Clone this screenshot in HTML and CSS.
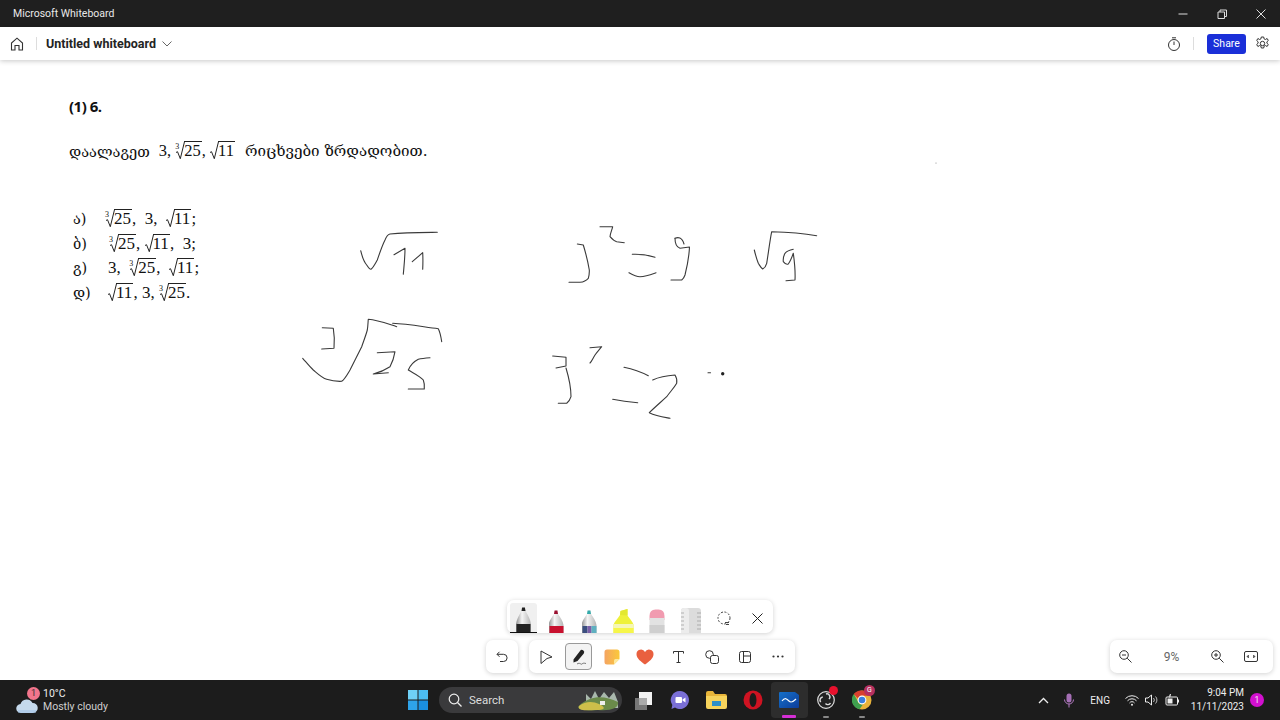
FILE: index.html
```html
<!DOCTYPE html>
<html lang="en">
<head>
    <meta charset="UTF-8">
    <title>Microsoft Whiteboard</title>
    <link rel="stylesheet" href="styles.css">
</head>
<body>
    <div class="titlebar">
        <span class="app-name">Microsoft Whiteboard</span>
        <div class="window-controls">
            <svg width="12" height="12" viewBox="0 0 12 12"><path d="M1.500 6h9" stroke="#ddd" fill="none"/></svg>
            <svg width="12" height="12" viewBox="0 0 12 12"><path d="M2 4h6.500v6.500h-6.500zM4 4v-2h6.500v6.500h-2" stroke="#ddd" fill="none"/></svg>
            <svg width="12" height="12" viewBox="0 0 12 12"><path d="M1.500 1.500l9 9M10.500 1.500l-9 9" stroke="#ddd" fill="none"/></svg>
        </div>
    </div>

    <header class="appbar">
        <svg class="home-icon" width="14" height="14" viewBox="0 0 14 14"><path d="M1.500 13v-7l5.500-4.800 5.500 4.800v7h-3.500v-4.500h-4v4.500z" stroke="#333" stroke-width="1.100" fill="none"/></svg>
        <span class="divider"></span>
        <span class="board-name">Untitled whiteboard</span>
        <svg width="10" height="6" viewBox="0 0 10 6"><path d="M.5.500l4.500 4.500 4.500-4.500" stroke="#666" fill="none"/></svg>
        <div class="appbar-right">
            <svg width="14" height="14" viewBox="0 0 14 14"><circle cx="7" cy="8" r="5.500" stroke="#333" fill="none"/><path d="M5 .8h4M7 4.500v3.500" stroke="#333" fill="none"/></svg>
            <span class="divider"></span>
            <button class="share">Share</button>
            <svg width="15" height="15" viewBox="0 0 15 15"><circle cx="7.500" cy="7.500" r="2.200" stroke="#333" fill="none"/><path d="M6.300 1h2.400l.4 1.900 1.300.6 1.700-1 1.200 2-1.400 1.300v1.400l1.400 1.300-1.200 2-1.700-1-1.300.6-.4 1.900h-2.400l-.4-1.900-1.300-.6-1.700 1-1.200-2 1.400-1.300v-1.400l-1.400-1.300 1.200-2 1.700 1 1.300-.6z" stroke="#333" fill="none"/></svg>
        </div>
    </header>

    <main class="canvas">
        <section class="question">
            <div class="q-number">(1) 6.</div>
            <div class="q-prompt">
                <span class="geo">დაალაგეთ</span>
                <span class="q-values">3, <sup class="idx">3</sup><span class="rad"><svg class="rad-sign" width="9" height="19" viewBox="0 0 9 19"><path d="M0 11.500l1.500-.8 2.800 7 4.200-17" stroke="#222" fill="none"/></svg><span class="radicand">25</span></span>, <span class="rad"><svg class="rad-sign" width="9" height="19" viewBox="0 0 9 19"><path d="M0 11.500l1.500-.8 2.800 7 4.200-17" stroke="#222" fill="none"/></svg><span class="radicand">11</span></span></span>
                <span class="geo geo-wide">რიცხვები ზრდადობით.</span>
            </div>
            <ol class="options">
                <li class="opt"><span class="geo opt-label">ა)</span><span class="opt-a"><sup class="idx">3</sup><span class="rad"><svg class="rad-sign" width="9" height="19" viewBox="0 0 9 19"><path d="M0 11.500l1.500-.8 2.800 7 4.200-17" stroke="#222" fill="none"/></svg><span class="radicand">25</span></span>,&nbsp; 3,&nbsp; <span class="rad"><svg class="rad-sign" width="9" height="19" viewBox="0 0 9 19"><path d="M0 11.500l1.500-.8 2.800 7 4.200-17" stroke="#222" fill="none"/></svg><span class="radicand">11</span></span>;</span></li>
                <li class="opt"><span class="geo opt-label">ბ)</span><span class="opt-b"><sup class="idx">3</sup><span class="rad"><svg class="rad-sign" width="9" height="19" viewBox="0 0 9 19"><path d="M0 11.500l1.500-.8 2.800 7 4.200-17" stroke="#222" fill="none"/></svg><span class="radicand">25</span></span>, <span class="rad"><svg class="rad-sign" width="9" height="19" viewBox="0 0 9 19"><path d="M0 11.500l1.500-.8 2.800 7 4.200-17" stroke="#222" fill="none"/></svg><span class="radicand">11</span></span>,&nbsp;&nbsp;3;</span></li>
                <li class="opt"><span class="geo opt-label">გ)</span><span class="opt-c">3,&nbsp; <sup class="idx">3</sup><span class="rad"><svg class="rad-sign" width="9" height="19" viewBox="0 0 9 19"><path d="M0 11.500l1.500-.8 2.800 7 4.200-17" stroke="#222" fill="none"/></svg><span class="radicand">25</span></span>,&nbsp; <span class="rad"><svg class="rad-sign" width="9" height="19" viewBox="0 0 9 19"><path d="M0 11.500l1.500-.8 2.800 7 4.200-17" stroke="#222" fill="none"/></svg><span class="radicand">11</span></span>;</span></li>
                <li class="opt"><span class="geo opt-label">დ)</span><span class="opt-c"><span class="rad"><svg class="rad-sign" width="9" height="19" viewBox="0 0 9 19"><path d="M0 11.500l1.500-.8 2.800 7 4.200-17" stroke="#222" fill="none"/></svg><span class="radicand">11</span></span>, 3, <sup class="idx">3</sup><span class="rad"><svg class="rad-sign" width="9" height="19" viewBox="0 0 9 19"><path d="M0 11.500l1.500-.8 2.800 7 4.200-17" stroke="#222" fill="none"/></svg><span class="radicand">25</span></span>.</span></li>
            </ol>
        </section>

        <!-- ink strokes, page coordinates minus the 60px of header -->
        <svg class="ink" width="1280" height="620" viewBox="0 60 1280 620">
            <g fill="none" stroke="#3a3a3a" stroke-width="1.100" stroke-linecap="round" stroke-linejoin="round">
                <path d="M360.700 250.700C362 256 364 262 366.700 265C368 267 370 269.500 371 269.300C373 268 375 264 377.300 260C380 252 382 246 385 240C386.500 236 388 234.500 390 234C405 232.500 420 232.500 437.300 232.300"/>
                <path d="M394 254.700L405 248.300C405 258 404 266 403.300 274.300"/>
                <path d="M412.300 261.700L422.700 252.700C423 258 423 263 422.700 269.300"/>
                <path d="M302.700 358.300C306 362 309 366 313.300 370C318 374 322 378 326.700 379.300C332 381 337 381.500 341.700 381.300C345 379 347 375 350 370C354 362 358 354 361.700 346.700C364 340 366 335 367.300 330C368 326 368 322 368.300 319.300C378 320 388 324 396.700 326.700"/>
                <path d="M392.700 323.300C408 324 424 327 438.300 328.700C440 332 441 337 441.700 341.700"/>
                <path d="M322.300 327.700L333.300 328.300C334.500 335 334.500 342 334 348.300L321.700 349"/>
                <path d="M377.300 352.700L395 351.700C394 358 392 363 390 366.700C385 370 379 372.500 373.300 374L388.300 372.700"/>
                <path d="M430 357.700C425 358 421 358.500 418.300 359.300C413 362 410 366 408.300 370C413 373 420 376 423.300 380C424.500 383 424.500 386 424.300 389L408.300 389"/>
                <path d="M577.300 244L583.300 245C586 254 588 262 589.300 270C589.500 274 589 276 588.300 278.300C586 281 583 282 580 282.300L569 282.300"/>
                <path d="M600 226.700L612.700 226.700C612 230 610 234 610 236.700C612 239 614 241 616.700 241.700L624.300 242.700"/>
                <path d="M632.300 254.300C640 254 648 255 655 257.300"/>
                <path d="M629 272.700C633 275 636 276.700 640 276.700C646 276.500 651 274.500 656 272.700"/>
                <path d="M675 238.300C678 237 682 237 684 244"/>
                <path d="M675 238.300C675 243 676 247 680 248.300L689.500 247C689 258 687 267 685 275C684 278 683 279 681.700 280L671 280"/>
                <path d="M754.300 250C755.500 255 757 260 758.300 263.300C760 266 761 268 762.700 269C764.500 268 766 266 766.700 263.300C768.500 252 770 240 771.700 231.700C787 232 802 233 816.700 235.700"/>
                <path d="M793.300 249.300C790 250 787 251 785 253.300C783.500 256 783 259 783.300 261.700C785 264 787 264.500 788.300 264C790.500 261 792 257 793.300 253.300C794.500 262 795.500 271 795 280L786 280.700"/>
                <path d="M552.700 356L566 357.300L566 366L556 368"/>
                <path d="M566 368C569 378 571 388 571 396.700C570 400 568.500 402 566.700 403.300L558.300 403.300"/>
                <path d="M590 347.700L601.700 346.700C599 350 597 352 595 355C593 358 592 361 590 363"/>
                <path d="M624 367.300C632 369 641 372 648.300 375.700"/>
                <path d="M612.700 399.300C621 401 629 402 637.700 402.700"/>
                <path d="M652.700 380C659 377 667 375.500 675 375C677 378 677 381 676.700 383.300C674 388 670 392 666.700 396.700C661 402 655 407 649.300 412.700C656 416 663 417 670 418.300"/>
                <path d="M708 372.800h2.500"/>
            </g>
            <circle cx="722.700" cy="373.700" r="1.700" fill="#222"/>
            <circle cx="936" cy="163" r=".6" fill="#888"/>
        </svg>

        <div class="pen-tray">
            <div class="pen pen-active">
                <svg width="27" height="26" viewBox="0 0 27 26"><defs><linearGradient id="barrel" x1="0" y1="0" x2="1" y2="0"><stop offset="0" stop-color="#8f8f8f"/><stop offset=".4" stop-color="#f5f5f5"/><stop offset="1" stop-color="#b5b5b5"/></linearGradient></defs><path d="M11.500 4l.6-3.500h2.800l.6 3.500c2.500 4 5 9 5.500 13v8h-15v-8c.5-4 3-9 5.500-13z" fill="url(#barrel)"/><path d="M11.500 4l.6-3.500h2.800l.6 3.500z" fill="#222"/><path d="M6.500 17h14v8h-14z" fill="#222"/><path d="M0 25.500h27" stroke="#111"/></svg>
            </div>
            <div class="pen">
                <svg width="15" height="23" viewBox="0 0 15 23"><path d="M5 4l.6-3.500h2.800l.6 3.500c2.500 4 5 7 5.500 11v8h-15v-8c.5-4 3-7 5.500-11z" fill="url(#barrel)"/><path d="M5 4l.6-3.500h2.800l.6 3.500z" fill="#9a1030"/><path d="M.5 16h14v7h-14z" fill="#c8102e"/></svg>
            </div>
            <div class="pen">
                <svg width="15" height="23" viewBox="0 0 15 23"><path d="M5 4l.6-3.500h2.800l.6 3.500c2.500 4 5 7 5.500 11v8h-15v-8c.5-4 3-7 5.500-11z" fill="url(#barrel)"/><path d="M5 4l.6-3.500h2.800l.6 3.500z" fill="#3aa"/><path d="M.5 16h5v7h-5z" fill="#3b4f7f"/><path d="M5.500 16h4v7h-4z" fill="#7a5fa8"/><path d="M9.500 16h5v7h-5z" fill="#5fb0c0"/></svg>
            </div>
            <div class="pen">
                <svg width="21" height="24" viewBox="0 0 21 24"><path d="M7 6l.5-4 7-2v6.500c2 3 5 6 6 9v8.500h-20v-8.500c1-3 4.500-6 6.500-9.500z" fill="#eef13a"/><path d="M7 6l.5-4 7-2v6.500z" fill="#e3e830"/><path d="M.5 19h20v5h-20z" fill="#f6f64a"/><path d="M.5 15h20v4h-20z" fill="#f5f6b8"/></svg>
            </div>
            <div class="pen">
                <svg width="16" height="24" viewBox="0 0 16 24"><path d="M.5 7q0-6.500 6-6.500h3q6 0 6 6.500v4h-15z" fill="#f19bb0"/><path d="M.5 9h15v15h-15z" fill="#e2e2e2"/><path d="M.5 16h15v8h-15z" fill="#cfcfcf"/></svg>
            </div>
            <div class="pen">
                <svg width="20" height="25" viewBox="0 0 20 25"><rect x="0" y="0" width="20" height="30" rx="3" fill="#dcdcdc"/><rect x="0" y="0" width="8" height="30" rx="3" fill="#ececec"/><path d="M0 5h3M0 9h3M0 13h3M0 17h3M0 21h3M16 5h4M16 9h4M16 13h4M16 17h4M16 21h4" stroke="#999" stroke-width=".7"/></svg>
            </div>
            <div class="pen pen-icon">
                <svg width="15" height="15" viewBox="0 0 15 15"><circle cx="7" cy="7" r="6" stroke="#444" stroke-dasharray="2 1.500" fill="none"/><path d="M8 11.500h4M9 13.500h3" stroke="#444"/></svg>
            </div>
            <div class="pen pen-icon">
                <svg width="11" height="11" viewBox="0 0 11 11"><path d="M.5.500l10 10M10.500.500l-10 10" stroke="#222" fill="none"/></svg>
            </div>
        </div>

        <div class="tool-box undo-box">
            <svg width="12" height="12" viewBox="0 0 12 12"><path d="M3.500.800l-2.500 2.500 2.500 2.500M1 3.300h6.500a3.500 3.500 0 0 1 0 7.200h-3.500" stroke="#333" fill="none"/></svg>
        </div>

        <div class="tool-box main-tools">
            <span class="tool tool-cursor"><svg width="13" height="14" viewBox="0 0 13 14"><path d="M1 1l11 6-5 1.500-6 5z" stroke="#333" fill="none"/></svg></span>
            <span class="tool tool-active"><svg width="16" height="16" viewBox="0 0 16 16"><path d="M2.500 10.500l6.500-8.500a2 2 0 0 1 3.800 2.500l-6.300 7.500-4 1.500z" fill="#222"/><path d="M6 15c3-2 4 1 5 0s2-1 4-.5" stroke="#444" stroke-width=".7" fill="none"/></svg></span>
            <span class="tool"><svg width="16" height="16" viewBox="0 0 16 16"><defs><linearGradient id="note" x1="0" y1="0" x2="1" y2="0"><stop offset="0" stop-color="#f4a462"/><stop offset="1" stop-color="#fbc93a"/></linearGradient></defs><path d="M3 .5h10a2.500 2.500 0 0 1 2.500 2.500v7l-5.500 5.500h-7a2.500 2.500 0 0 1-2.500-2.500v-10a2.500 2.500 0 0 1 2.500-2.500z" fill="url(#note)"/><path d="M15.500 10h-4a1.500 1.500 0 0 0-1.500 1.500v4z" fill="#fdeaa0"/></svg></span>
            <span class="tool"><svg width="18" height="16" viewBox="0 0 18 16"><path d="M9 15.500c-4-3-8.500-6-8.500-10.300a4.500 4.500 0 0 1 8.500-2.200 4.500 4.500 0 0 1 8.500 2.200c0 4.300-4.500 7.300-8.500 10.300z" fill="#e9603f"/></svg></span>
            <span class="tool"><svg width="11" height="12" viewBox="0 0 11 12"><path d="M.5 2.500v-2h10v2M5.500.500v11M3.500 11.500h4" stroke="#333" fill="none"/></svg></span>
            <span class="tool"><svg width="14" height="14" viewBox="0 0 14 14"><circle cx="4.500" cy="4.500" r="3.800" stroke="#333" fill="none"/><rect x="5.500" y="5.500" width="8" height="8" rx="2" fill="#fff" stroke="#333"/></svg></span>
            <span class="tool"><svg width="12" height="12" viewBox="0 0 12 12"><rect x=".5" y=".5" width="11" height="11" rx="2" stroke="#333" fill="none"/><path d="M4.500.500v11M4.500 5h7" stroke="#333" fill="none"/></svg></span>
            <span class="tool"><svg width="12" height="3" viewBox="0 0 12 3"><circle cx="1.500" cy="1.500" r="1.100" fill="#333"/><circle cx="6" cy="1.500" r="1.100" fill="#333"/><circle cx="10.500" cy="1.500" r="1.100" fill="#333"/></svg></span>
        </div>

        <div class="tool-box zoom-box">
            <svg width="13" height="13" viewBox="0 0 13 13"><circle cx="5" cy="5" r="4.300" stroke="#333" fill="none"/><path d="M8.200 8.200l4.300 4.300M3 5h4" stroke="#333" fill="none"/></svg>
            <span class="zoom-value">9%</span>
            <svg width="13" height="13" viewBox="0 0 13 13"><circle cx="5" cy="5" r="4.300" stroke="#333" fill="none"/><path d="M8.200 8.200l4.300 4.300M3 5h4M5 3v4" stroke="#333" fill="none"/></svg>
            <svg class="zoom-fit" width="14" height="11" viewBox="0 0 14 11"><rect x=".5" y=".5" width="13" height="10" rx="1.500" stroke="#333" fill="none"/><path d="M3 5.500l1.500-1.500v3zM11 5.500l-1.500-1.500v3z" fill="#333" stroke="#333" stroke-width=".5"/></svg>
        </div>
    </main>

    <footer class="taskbar">
        <div class="weather">
            <div class="weather-icon">
                <svg width="22" height="24" viewBox="0 0 22 24"><path d="M15 2a8 8 0 0 1-9 11l8-2z" fill="#e7b566"/><path d="M5 23a4.500 4.500 0 0 1-.5-9 6.500 6.500 0 0 1 12-1 5 5 0 0 1 .5 10z" fill="#c5d9ec"/><path d="M2 20h18v3h-18z" fill="#9fc1e6" opacity=".5"/></svg>
                <span class="weather-badge">1</span>
            </div>
            <div class="weather-text">
                <span class="temp">10°C</span>
                <span class="cond">Mostly cloudy</span>
            </div>
        </div>

        <div class="task-icons">
            <span class="task-icon start-icon">
                <svg width="20" height="20" viewBox="0 0 20 20"><path d="M0 0h9.500v9.500h-9.500z" fill="#6fd0f6"/><path d="M10.500 0h9.500v9.500h-9.500z" fill="#4cbdf2"/><path d="M0 10.500h9.500v9.500h-9.500z" fill="#2ea3ea"/><path d="M10.500 10.500h9.500v9.500h-9.500z" fill="#1a8fe0"/></svg>
            </span>
            <div class="search-pill">
                <svg width="14" height="14" viewBox="0 0 14 14"><circle cx="6" cy="6" r="4.800" stroke="#eee" stroke-width="1.200" fill="none"/><path d="M9.500 9.500l4 4" stroke="#eee" stroke-width="1.200"/></svg>
                <span class="search-label">Search</span>
                <svg class="search-art" width="42" height="24" viewBox="0 0 42 24"><path d="M8 6l5 5 4-8 4 8 5-7 5 6 5-6 4 10v6h-32z" fill="#a9b8ad"/><path d="M12 11c8-3 18-2 28 3 1 6-6 9-20 8-14 1-22-1-19-4 2-3 6-5 11-7z" fill="#6a8a4a"/><path d="M1 18c6-5 14-5 20-2s8 6-4 6c-10 1-18 0-16-4z" fill="#cdbf4a"/><path d="M22 13h5v4h-5z" fill="#eee"/></svg>
            </div>
            <span class="task-icon">
                <svg width="20" height="20" viewBox="0 0 20 20"><rect x="2" y="8" width="12" height="12" fill="#777"/><rect x="6" y="2" width="13" height="13" fill="#f2f2f2"/><rect x="6" y="8" width="8" height="7" fill="#aaa"/></svg>
            </span>
            <span class="task-icon">
                <svg width="20" height="20" viewBox="0 0 20 20"><path d="M10 1a9 9 0 1 1-5 16.500l-3.500 1.500.8-4a9 9 0 0 1 7.700-14z" fill="#7a6fd6"/><rect x="5.500" y="7" width="6.500" height="6" rx="1" fill="#fff"/><path d="M12.500 9.500l3-2v5l-3-2z" fill="#fff"/></svg>
            </span>
            <span class="task-icon">
                <svg width="21" height="18" viewBox="0 0 21 18"><path d="M0 2a2 2 0 0 1 2-2h5l2 3h10a2 2 0 0 1 2 2v3h-21z" fill="#e8b53a"/><path d="M0 5h21v11a2 2 0 0 1-2 2h-17a2 2 0 0 1-2-2z" fill="#f7d35c"/><rect x="6" y="10" width="9" height="5" fill="#2e8fc7"/></svg>
            </span>
            <span class="task-icon">
                <svg width="20" height="20" viewBox="0 0 20 20"><circle cx="10" cy="10" r="9.500" fill="#cf1322"/><ellipse cx="10" cy="10" rx="3.500" ry="7" fill="#1c1c1c"/></svg>
            </span>
            <span class="task-icon task-active">
                <svg width="20" height="16" viewBox="0 0 20 16"><defs><linearGradient id="wb" x1="0" y1="0" x2="1" y2="1"><stop offset="0" stop-color="#1570c9"/><stop offset="1" stop-color="#0d3d9a"/></linearGradient></defs><path d="M1 0h15l4 3v12a1 1 0 0 1-1 1h-18a1 1 0 0 1-1-1v-14a1 1 0 0 1 1-1z" fill="url(#wb)"/><path d="M3 9c3-4 5-2 7 0s4 1 7-2" stroke="#fff" stroke-width="1.200" fill="none"/></svg>
                <span class="task-dot dot-pink"></span>
            </span>
            <span class="task-icon">
                <svg width="18" height="18" viewBox="0 0 18 18"><circle cx="9" cy="9" r="8.300" stroke="#ddd" stroke-width="1.200" fill="#222"/><path d="M9 3a3 3 0 0 1 3 5M13.500 12a3 3 0 0 1-5 .5M3.800 11a3 3 0 0 1 2-5" stroke="#ddd" stroke-width="1.400" fill="none"/></svg>
                <span class="red-dot"></span>
                <span class="task-dot"></span>
            </span>
            <span class="task-icon">
                <svg width="20" height="20" viewBox="0 0 20 20"><circle cx="10" cy="10" r="9.500" fill="#e8b23a"/><path d="M10 .5a9.500 9.500 0 0 1 8.500 5.200h-8.500a4.500 4.500 0 0 0-4.200 2.900l-4-4.600a9.500 9.500 0 0 1 8.200-3.500z" fill="#d8402f"/><path d="M1.800 4a9.500 9.500 0 0 0 5.700 15.200l3.600-5a4.500 4.500 0 0 1-5.300-3z" fill="#3f9f4e"/><circle cx="10" cy="10" r="4.400" fill="#fff"/><circle cx="10" cy="10" r="3.300" fill="#3a7fe0"/></svg>
                <span class="chrome-badge">G</span>
                <span class="task-dot"></span>
            </span>
        </div>

        <div class="tray">
            <svg class="tray-chevron" width="11" height="7" viewBox="0 0 11 7"><path d="M1 6l4.500-4.500 4.500 4.500" stroke="#eee" stroke-width="1.300" fill="none"/></svg>
            <svg class="tray-mic" width="10" height="15" viewBox="0 0 10 15"><rect x="2.500" y=".5" width="5" height="9" rx="2.500" fill="#a56fb5"/><path d="M.5 6.500a4.500 4.500 0 0 0 9 0M5 11v3.500" stroke="#b57cc4" fill="none"/></svg>
            <span class="lang">ENG</span>
            <svg class="tray-wifi" width="14" height="11" viewBox="0 0 14 11"><path d="M.5 3.500a9 9 0 0 1 13 0M2.500 5.800a6 6 0 0 1 9 0M4.500 8a3 3 0 0 1 5 0" stroke="#eee" fill="none"/><circle cx="7" cy="9.700" r="1" fill="#eee"/></svg>
            <svg class="tray-vol" width="14" height="12" viewBox="0 0 14 12"><path d="M.5 4h2.500l3.500-3v10l-3.500-3h-2.500z" stroke="#eee" fill="none"/><path d="M8.500 4a3 3 0 0 1 0 4M10.500 2.500a5 5 0 0 1 0 7" stroke="#bbb" fill="none"/></svg>
            <svg class="tray-batt" width="15" height="12" viewBox="0 0 15 12"><rect x="1" y="3" width="11.500" height="8" rx="1" stroke="#eee" fill="none"/><rect x="2.500" y="4.500" width="5" height="5" fill="#eee"/><path d="M13.500 5.500v3" stroke="#eee"/><path d="M4 3l1.500-3-.5 3z" stroke="#eee" stroke-width=".8"/></svg>
            <div class="clock">
                <span>9:04 PM</span>
                <span>11/11/2023</span>
            </div>
            <span class="notif-badge">1</span>
        </div>
    </footer>
</body>
</html>
```

FILE: styles.css
```css
* {
    box-sizing: border-box;
}

body {
    margin: 0;
    width: 1280px;
    height: 720px;
    overflow: hidden;
    display: flex;
    flex-direction: column;
    font-family: Roboto, "Open Sans", sans-serif;
    background-color: #fff;
}

.titlebar {
    height: 27px;
    flex: none;
    display: flex;
    align-items: center;
    justify-content: space-between;
    padding: 0 13px;
    background-color: #1f1f1f;
    color: #e8e8e8;
    font-size: 10.500px;
}

.window-controls {
    display: flex;
    gap: 27px;
}

.appbar {
    height: 33px;
    flex: none;
    display: flex;
    align-items: center;
    padding: 0 10px;
    background-color: #fff;
    box-shadow: 0 1px 5px rgba(0,0,0,0.22);
    position: relative;
    z-index: 2;
}

.divider {
    width: 1px;
    height: 13px;
    background-color: #ddd;
}

.home-icon {
    margin-right: 12px;
}

.board-name {
    margin: 0 6px 0 9px;
    font-size: 12.500px;
    font-weight: 700;
    color: #242424;
}

.appbar-right {
    margin-left: auto;
    display: flex;
    align-items: center;
    gap: 12px;
}

.share {
    width: 39px;
    height: 20px;
    padding: 0;
    margin: 0 -3px 0 1px;
    border: none;
    border-radius: 3px;
    background-color: #1a2fd8;
    color: #fff;
    font-family: inherit;
    font-size: 10.500px;
}

.canvas {
    flex: 1;
    position: relative;
    background-color: #fff;
}

.question {
    position: absolute;
    left: 69px;
    top: 36px;
    color: #111;
    font-family: "Liberation Serif", serif;
}

.q-number {
    font-family: "Open Sans", sans-serif;
    font-size: 15px;
    font-weight: 700;
    letter-spacing: -0.500px;
    line-height: 20px;
}

.q-prompt {
    margin-top: 24px;
    height: 22px;
    display: flex;
    align-items: center;
    font-size: 16.500px;
    white-space: nowrap;
}

.geo {
    font-family: "DejaVu Serif", "DejaVu Sans", serif;
    font-size: 14.600px;
}

.geo-wide {
    font-size: 15.200px;
}

.q-values {
    margin: 0 10px 0 9px;
}

.idx {
    font-size: 8px;
    line-height: 0;
    vertical-align: 7px;
    margin-right: -3px;
}

.rad {
    display: inline-flex;
    align-items: flex-start;
    height: 19px;
    vertical-align: -4px;
}

.rad-sign {
    flex: none;
}

.radicand {
    border-top: 1px solid #222;
    line-height: 17px;
    margin-left: -1px;
    padding-right: 1px;
}

.options {
    margin: 45px 0 0;
    padding: 0;
    list-style: none;
    font-size: 17px;
    white-space: nowrap;
}

.opt {
    height: 24.500px;
    display: flex;
    align-items: center;
    padding-left: 4px;
}

.opt-label {
    width: 32px;
    font-size: 14.500px;
}

.opt-b {
    margin-left: 4px;
}

.opt-c {
    margin-left: 3px;
}

.ink {
    position: absolute;
    left: 0;
    top: 0;
    pointer-events: none;
}

.pen-tray, .tool-box {
    position: absolute;
    display: flex;
    align-items: center;
    height: 33px;
    background-color: #fff;
    border-radius: 7px;
    box-shadow: 0 1px 5px rgba(0,0,0,0.18);
}

.pen-tray {
    left: 507px;
    top: 540px;
    width: 266px;
    padding: 0 0 0 3px;
    align-items: flex-end;
}

.pen {
    flex: none;
    width: 33.600px;
    height: 30px;
    display: flex;
    align-items: flex-end;
    justify-content: center;
    overflow: hidden;
}

.pen-active {
    width: 27px;
    margin-right: 2.500px;
    background-color: #f0f0f0;
    border-radius: 3px 3px 0 0;
}

.pen-icon {
    align-items: center;
}

.undo-box {
    left: 486px;
    top: 580px;
    width: 32px;
    justify-content: center;
}

.main-tools {
    left: 529px;
    top: 580px;
    width: 266px;
}

.tool {
    width: 33.250px;
    height: 27px;
    display: flex;
    align-items: center;
    justify-content: center;
}

.tool-cursor {
    padding-left: 2px;
}

.tool-active {
    flex: none;
    width: 27px;
    margin: 0 3px;
    background-color: #f3f3f3;
    border: 1px solid #999;
    border-radius: 4px;
}

.zoom-box {
    left: 1110px;
    top: 580px;
    width: 163px;
    padding-left: 9px;
}

.zoom-value {
    width: 79px;
    font-size: 12px;
    color: #666;
    text-align: center;
}

.zoom-fit {
    margin-left: 20px;
}

.taskbar {
    height: 40px;
    flex: none;
    display: flex;
    align-items: center;
    background-color: #1c1c1c;
    color: #eee;
    position: relative;
    z-index: 3;
}

.weather {
    width: 400px;
    flex: none;
    display: flex;
    align-items: center;
    gap: 1px;
    padding-left: 16px;
}

.weather-icon {
    width: 26px;
    height: 28px;
    position: relative;
    display: flex;
    align-items: flex-end;
}

.weather-badge {
    position: absolute;
    left: 11px;
    top: 1px;
    width: 13px;
    height: 13px;
    border-radius: 50%;
    background-color: #f2758c;
    color: #333;
    font-size: 9px;
    line-height: 13px;
    text-align: center;
}

.weather-text {
    display: flex;
    flex-direction: column;
    font-size: 10.500px;
    line-height: 13px;
}

.cond {
    color: #cfcfcf;
}

.task-icons {
    display: flex;
    align-items: center;
    height: 40px;
}

.task-icon {
    width: 36.500px;
    height: 36px;
    position: relative;
    display: flex;
    align-items: center;
    justify-content: center;
}

.start-icon {
    width: 36px;
}

.search-pill {
    width: 183px;
    height: 26px;
    margin: 0 3px;
    padding: 0 2px 0 9px;
    display: flex;
    align-items: center;
    gap: 7px;
    border-radius: 13px;
    background-color: #3a3a3c;
    color: #ddd;
    font-size: 11.500px;
}

.search-art {
    margin-left: auto;
}

.task-active {
    background-color: #2d2d2d;
    border-radius: 4px;
}

.task-dot {
    position: absolute;
    left: 15px;
    bottom: 0;
    width: 6px;
    height: 2px;
    border-radius: 1px;
    background-color: #888;
}

.dot-pink {
    left: 11px;
    width: 14px;
    height: 3px;
    background-color: #d62fd6;
}

.red-dot {
    position: absolute;
    left: 21px;
    top: 4px;
    width: 9px;
    height: 9px;
    border-radius: 50%;
    background-color: #e8112d;
}

.chrome-badge {
    position: absolute;
    left: 20px;
    top: 3px;
    width: 11px;
    height: 11px;
    border-radius: 50%;
    background-color: #b5305f;
    color: #fff;
    font-size: 7px;
    line-height: 11px;
    text-align: center;
}

.tray {
    margin-left: auto;
    padding-right: 16px;
    display: flex;
    align-items: center;
}

.tray-mic {
    margin-left: 15px;
}

.lang {
    margin: 0 15px 0 16px;
    font-size: 10px;
}

.tray-vol {
    margin-left: 6px;
}

.tray-batt {
    margin-left: 6px;
}

.clock {
    width: 64px;
    display: flex;
    flex-direction: column;
    align-items: flex-end;
    font-size: 10px;
    line-height: 14px;
}

.notif-badge {
    margin-left: 6px;
    width: 14px;
    height: 14px;
    border-radius: 50%;
    background-color: #d210cf;
    color: #eee;
    font-size: 8.500px;
    line-height: 14px;
    text-align: center;
}
```
